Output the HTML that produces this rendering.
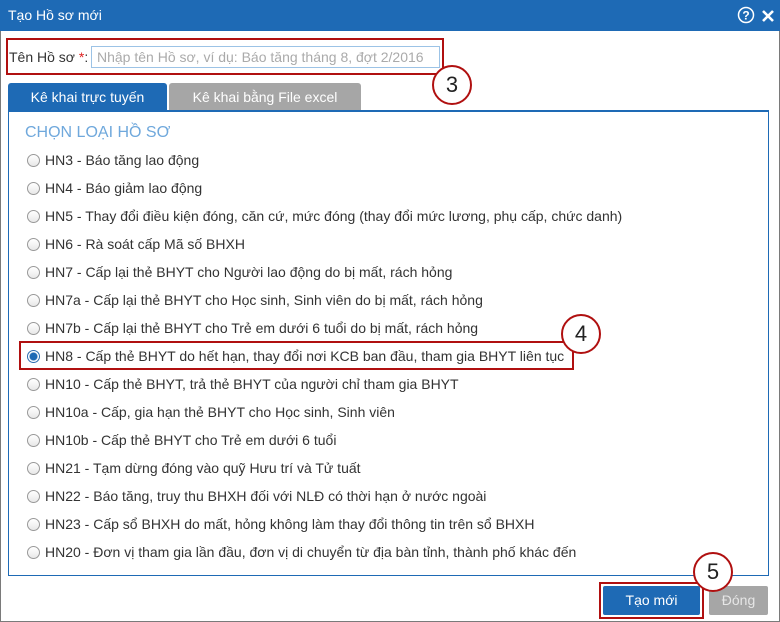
<!DOCTYPE html>
<html><head><meta charset="utf-8"><style>
*{box-sizing:border-box;margin:0;padding:0}
body{width:780px;height:622px;background:#fff;font-family:"Liberation Sans",Arial,sans-serif;position:relative;overflow:hidden;color:#333}
.win{position:absolute;left:0;top:0;width:780px;height:622px;border:1px solid #7a7a7a;border-top:none}
.title{position:absolute;left:0;top:0;width:780px;height:31px;background:#1e6ab5;color:#fff;font-size:14px;line-height:31px;padding-left:8px}
.abs{position:absolute}
.circ{position:absolute;width:40px;height:40px;border:2px solid #b01010;border-radius:50%;background:#fff;font-size:22px;text-align:center;line-height:36px;color:#222}
.row{position:absolute;left:27px;font-size:14px;height:20px;line-height:20px;white-space:nowrap}
.rd{display:inline-block;width:13px;height:13px;border:1px solid #999;border-radius:50%;vertical-align:-2px;margin-right:5px;background:linear-gradient(#fff,#e8e8e8)}
.rd.on{background:radial-gradient(circle,#1e6ab5 0 3.5px,#fff 4.5px);border-color:#2b6cb0}
</style></head><body>
<div class="win"></div>
<div class="title">Tạo Hồ sơ mới</div>
<svg class="abs" style="left:737px;top:6px" width="18" height="18" viewBox="0 0 18 18"><circle cx="9" cy="9" r="7.5" fill="none" stroke="#fff" stroke-width="1.5"/><text x="9" y="13.5" font-size="12" fill="#fff" text-anchor="middle" font-family="Liberation Sans" font-weight="bold">?</text></svg>
<svg class="abs" style="left:762px;top:10px" width="12" height="12" viewBox="0 0 12 12"><path d="M1 1L11 11M11 1L1 11" stroke="#fff" stroke-width="2.6"/></svg>

<div class="abs" style="left:6px;top:38px;width:438px;height:37px;border:2px solid #b01010"></div>
<div class="abs" style="left:9px;top:48px;font-size:14px;line-height:18px">Tên Hồ sơ <span style="color:#e02020">*</span>:</div>
<div class="abs" style="left:91px;top:46px;width:349px;height:22px;border:1px solid #9cc3e6;font-size:14px;line-height:20px;color:#aaa;padding-left:5px">Nhập tên Hồ sơ, ví dụ: Báo tăng tháng 8, đợt 2/2016</div>
<div class="circ" style="left:432px;top:65px">3</div>

<div class="abs" style="left:8px;top:83px;width:159px;height:28px;background:#1e6ab5;color:#fff;font-size:14px;line-height:28px;text-align:center;border-radius:3px 3px 0 0">Kê khai trực tuyến</div>
<div class="abs" style="left:169px;top:83px;width:192px;height:27px;background:#a6a6a6;color:#fff;font-size:14px;line-height:28px;text-align:center;border-radius:3px 3px 0 0">Kê khai bằng File excel</div>
<div class="abs" style="left:8px;top:110px;width:761px;height:466px;border:1px solid #1e6ab5;border-top:2px solid #1e6ab5"></div>
<div class="abs" style="left:25px;top:124px;font-size:16px;color:#6fa8dc">CHỌN LOẠI HỒ SƠ</div>

<div class="row" style="top:150px"><span class="rd"></span>HN3 - Báo tăng lao động</div>
<div class="row" style="top:178px"><span class="rd"></span>HN4 - Báo giảm lao động</div>
<div class="row" style="top:206px"><span class="rd"></span>HN5 - Thay đổi điều kiện đóng, căn cứ, mức đóng (thay đổi mức lương, phụ cấp, chức danh)</div>
<div class="row" style="top:234px"><span class="rd"></span>HN6 - Rà soát cấp Mã số BHXH</div>
<div class="row" style="top:262px"><span class="rd"></span>HN7 - Cấp lại thẻ BHYT cho Người lao động do bị mất, rách hỏng</div>
<div class="row" style="top:290px"><span class="rd"></span>HN7a - Cấp lại thẻ BHYT cho Học sinh, Sinh viên do bị mất, rách hỏng</div>
<div class="row" style="top:318px"><span class="rd"></span>HN7b - Cấp lại thẻ BHYT cho Trẻ em dưới 6 tuổi do bị mất, rách hỏng</div>
<div class="abs" style="left:19px;top:341px;width:555px;height:29px;border:2px solid #b01010"></div>
<div class="row" style="top:346px"><span class="rd on"></span>HN8 - Cấp thẻ BHYT do hết hạn, thay đổi nơi KCB ban đầu, tham gia BHYT liên tục</div>
<div class="circ" style="left:561px;top:314px">4</div>
<div class="row" style="top:374px"><span class="rd"></span>HN10 - Cấp thẻ BHYT, trả thẻ BHYT của người chỉ tham gia BHYT</div>
<div class="row" style="top:402px"><span class="rd"></span>HN10a - Cấp, gia hạn thẻ BHYT cho Học sinh, Sinh viên</div>
<div class="row" style="top:430px"><span class="rd"></span>HN10b - Cấp thẻ BHYT cho Trẻ em dưới 6 tuổi</div>
<div class="row" style="top:458px"><span class="rd"></span>HN21 - Tạm dừng đóng vào quỹ Hưu trí và Tử tuất</div>
<div class="row" style="top:486px"><span class="rd"></span>HN22 - Báo tăng, truy thu BHXH đối với NLĐ có thời hạn ở nước ngoài</div>
<div class="row" style="top:514px"><span class="rd"></span>HN23 - Cấp sổ BHXH do mất, hỏng không làm thay đổi thông tin trên sổ BHXH</div>
<div class="row" style="top:542px"><span class="rd"></span>HN20 - Đơn vị tham gia lần đầu, đơn vị di chuyển từ địa bàn tỉnh, thành phố khác đến</div>

<div class="abs" style="left:599px;top:582px;width:105px;height:37px;border:2px solid #b01010"></div>
<div class="abs" style="left:603px;top:586px;width:97px;height:29px;background:#1e6ab5;color:#fff;font-size:14px;line-height:29px;text-align:center;border-radius:2px">Tạo mới</div>
<div class="abs" style="left:709px;top:586px;width:59px;height:29px;background:#a6a6a6;color:#e6e6e6;font-size:14px;line-height:29px;text-align:center;border-radius:2px">Đóng</div>
<div class="circ" style="left:693px;top:552px">5</div>
</body></html>
